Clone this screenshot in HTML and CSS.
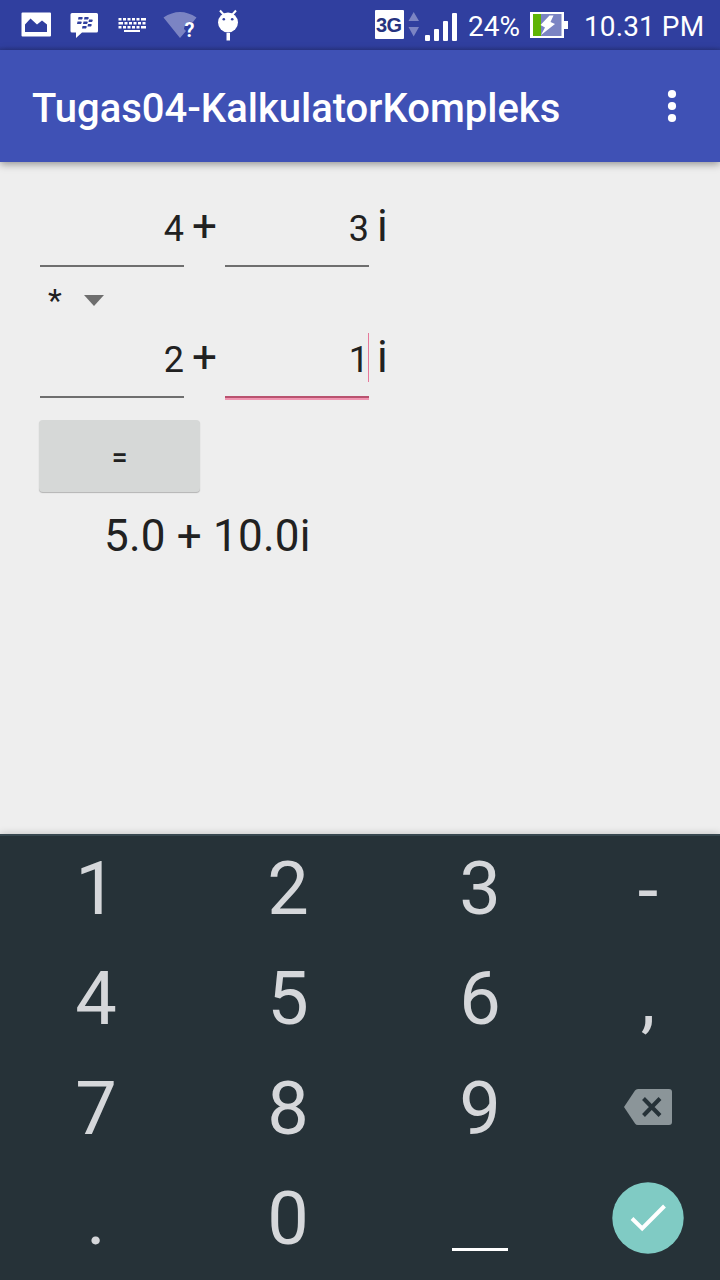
FILE: index.html
```html
<!DOCTYPE html>
<html lang="id">
<head>
<meta charset="utf-8">
<title>Tugas04-KalkulatorKompleks</title>
<link rel="stylesheet" href="styles.css">
</head>
<body>
<div class="screen">
  <header class="status">
    <svg class="notifications" width="260" height="50" viewBox="0 0 260 50" fill="#fff">
      <path fill-rule="evenodd" d="M22.500 12.500H50Q51 12.500 51 13.500V35.500Q51 36.500 50 36.500H22.500Q21.500 36.500 21.500 35.500V13.500Q21.500 12.500 22.500 12.500ZM25 32H47V24.500L42 20.500L37 24.500L30.500 18.500L25 24.500Z"/>
      <path d="M72 13H96.500Q98 13 98 14.500V31Q98 32.500 96.500 32.500H82L76 38V32.500H72Q70.500 32.500 70.500 31V14.500Q70.500 13 72 13Z"/>
      <g fill="#303f9f"><path d="M78.500 17h3.500q1.500 .5 0 2.500h-4zM84.500 17h3.500q1.500 .5 0 2.500h-4zM77.500 21.500h3.500q1.500 .5 0 2.500h-4zM83.500 21.500h3.500q1.500 .5 0 2.500h-4zM89 19.500h3q1.500 .5 0 2.500h-3.500zM82.500 26h3.500q1.500 .5 0 2.500h-4zM88 24h3q1.500 .5 0 2.500h-3.500z"/></g>
      <path d="M118.500 18h3v2.500h-3zm4.500 0h3v2.500h-3zm4.500 0h3v2.500h-3zm4.500 0h3v2.500h-3zm4.500 0h3v2.500h-3zm4.500 0h5v2.500h-5zM118.500 22h4.500v2.500h-4.500zm6 0h3v2.500h-3zm4.500 0h3v2.500h-3zm4.500 0h3v2.500h-3zm4.500 0h3v2.500h-3zm4.500 0h3v2.500h-3zM118.500 26h3v2.500h-3zm4.500 0h3v2.500h-3zm4.500 0h3v2.500h-3zm4.500 0h3v2.500h-3zm4.500 0h3v2.500h-3zm4.500 0h5v2.500h-5zM124 30h16v2h-16z"/>
      <path fill="#7b84c3" d="M163.500 17.500Q180 6.500 196.500 17.500L193 22Q185 20 184 29L186 31L180 38Z"/>
      <text class="unknown" x="184.500" y="37">?</text>
      <ellipse cx="228" cy="22.500" rx="10" ry="10"/>
      <path d="M220 10.500L224 15M236 10.500L232 15" stroke="#fff" stroke-width="2"/>
      <path d="M226.500 33h3.500v7.500h-3.500z"/>
      <circle cx="223.800" cy="19.300" r="1.300" fill="#303f9f"/><circle cx="232.200" cy="19.300" r="1.300" fill="#303f9f"/>
    </svg>
    <svg class="signal" width="90" height="50" viewBox="370 0 90 50" fill="#fff">
      <rect x="375" y="10" width="29" height="29" rx="1"/>
      <text class="network" x="376" y="32">3G</text>
      <path fill="#7b84c3" d="M408.500 21L413.700 12L419 21ZM408.500 27L413.700 36.500L419 27Z"/>
      <rect x="425" y="35" width="5" height="6" rx="1"/><rect x="434" y="29" width="5" height="12" rx="1"/><rect x="443" y="21" width="5" height="20" rx="1"/><rect x="452" y="13" width="5" height="28" rx="1"/>
    </svg>
    <span class="percent">24%</span>
    <svg class="battery" width="44" height="50" viewBox="526 0 44 50">
      <path fill="#fff" d="M530 12H564V21H568V29H564V38H530Z"/>
      <path fill="#7b84c3" d="M533 14H561.500V36H533Z"/>
      <path fill="#5fb404" d="M533 14H541V36H533Z"/>
      <path fill="#fff" d="M549.500 15.500H553.500L550.500 22L555 24L541 35L545 27.500L540.500 25Z"/>
    </svg>
    <time class="clock">10.31 PM</time>
  </header>
  <div class="appbar">
    <h1 class="title">Tugas04-KalkulatorKompleks</h1>
    <svg class="overflow" width="12" height="36" viewBox="0 0 12 36" fill="#fff"><circle cx="6" cy="6" r="4.100"/><circle cx="6" cy="18" r="4.100"/><circle cx="6" cy="30" r="4.100"/></svg>
  </div>
  <main class="content">
    <div class="complex">
      <div class="field">4</div><span class="plus">+</span><div class="field">3</div><span class="imag">i</span>
    </div>
    <div class="operator"><span class="symbol">*</span><svg width="20" height="11" viewBox="0 0 20 11"><path fill="#6e6e6e" d="M0 0H20L10 11Z"/></svg></div>
    <div class="complex">
      <div class="field">2</div><span class="plus">+</span><div class="field focused">1<i class="caret"></i></div><span class="imag">i</span>
    </div>
    <div class="equals">=</div>
    <div class="result">5.0 + 10.0i</div>
  </main>
  <div class="keyboard">
    <div class="key">1</div><div class="key">2</div><div class="key">3</div><div class="key minus">-</div>
    <div class="key">4</div><div class="key">5</div><div class="key">6</div><div class="key">,</div>
    <div class="key">7</div><div class="key">8</div><div class="key">9</div>
    <div class="key"><svg class="delete" width="48" height="36" viewBox="0 0 48 36"><path fill="#8b9599" d="M14 0H45Q48 0 48 3V33Q48 36 45 36H14Q12 36 11 34.500L0 18L11 1.500Q12 0 14 0Z"/><path d="M19.500 9.500L36 26.500M36 9.500L19.500 26.500" stroke="#263238" stroke-width="4"/></svg></div>
    <div class="key">.</div><div class="key">0</div><div class="key"><span class="space"></span></div>
    <div class="key"><svg class="done" width="72" height="72" viewBox="0 0 72 72"><circle cx="36" cy="36" r="35.700" fill="#80cbc4"/><path d="M20 36.500L30.200 46.500L52.500 24" fill="none" stroke="#fff" stroke-width="4"/></svg></div>
  </div>
</div>
</body>
</html>
```
FILE: styles.css
```css
body {
  margin: 0;
  font-family: Roboto, sans-serif;
}

.screen {
  display: flex;
  flex-direction: column;
  width: 720px;
  height: 1280px;
  overflow: hidden;
  background: #eee;
  color: #212121;
}

.status {
  display: flex;
  height: 50px;
  background: linear-gradient(#303f9f 46px, #2c3990);
  color: #fff;
  font-size: 28px;
  line-height: 53px;
  white-space: nowrap;
}

.notifications {
  margin-right: 110px;
}

.unknown {
  font: 700 20px Roboto, sans-serif;
}

.network {
  font: 700 20px "Liberation Sans", sans-serif;
  letter-spacing: -0.5px;
  fill: #26337f;
}

.percent {
  width: 58px;
  padding-left: 8px;
}

.clock {
  padding-left: 14px;
  letter-spacing: 0.1px;
}

.appbar {
  display: flex;
  align-items: center;
  justify-content: space-between;
  height: 112px;
  padding: 0 42px 0 32px;
  box-sizing: border-box;
  background: #3f51b5;
  box-shadow: 0 2px 8px rgba(0, 0, 0, 0.4);
  color: #fff;
}

.title {
  margin: 6px 0 0;
  font-size: 40px;
  font-weight: 500;
  line-height: 48px;
}

.content {
  flex: 1;
  padding: 40px 36px 0;
}

.complex {
  display: flex;
  align-items: baseline;
  height: 62px;
  padding-left: 4px;
}

.field {
  position: relative;
  width: 144px;
  height: 60px;
  border-bottom: 2px solid #6e6e6e;
  font-size: 36px;
  line-height: 48px;
  text-align: right;
}

.focused {
  border-bottom-color: #b9526f;
  box-shadow: 0 2px #f095b1;
}

.caret {
  position: absolute;
  right: 0;
  top: -3px;
  width: 1px;
  height: 49px;
  background: #e6789a;
}

.plus,
.imag {
  font-size: 44px;
  line-height: 48px;
}

.plus {
  width: 33px;
  padding-left: 8px;
}

.imag {
  padding-left: 8px;
}

.operator {
  display: flex;
  align-items: center;
  gap: 22px;
  height: 69px;
  padding: 4px 0 0 12px;
  box-sizing: border-box;
}

.symbol {
  width: 14px;
  margin-bottom: 2px;
  font-size: 32px;
  line-height: 40px;
}

.equals {
  width: 161px;
  height: 72px;
  margin: 25px 0 0 3px;
  border-radius: 4px;
  background: #d6d8d7;
  box-shadow: 0 1px 1px rgba(0, 0, 0, 0.25);
  font-size: 28px;
  font-weight: 500;
  line-height: 76px;
  text-align: center;
}

.result {
  margin: 18px 0 0 68px;
  font-size: 44px;
  letter-spacing: 0.2px;
  line-height: 52px;
}

.keyboard {
  display: grid;
  grid-template-columns: 192px 192px 192px 144px;
  grid-template-rows: repeat(4, 110px);
  height: 446px;
  box-sizing: border-box;
  border-top: 2px solid #37474f;
  background: #263238;
  box-shadow: 0 0 8px rgba(0, 0, 0, 0.2);
  color: #d5d7da;
  font-size: 74px;
  line-height: 106px;
  text-align: center;
}

.key {
  height: 110px;
}

.minus {
  line-height: 109px;
}

.delete,
.done {
  display: block;
  margin: 0 auto;
}

.delete {
  padding-top: 33px;
}

.done {
  padding-top: 16px;
}

.space {
  display: block;
  width: 56px;
  height: 3px;
  margin: 82px auto 0;
  background: #fff;
}
```
